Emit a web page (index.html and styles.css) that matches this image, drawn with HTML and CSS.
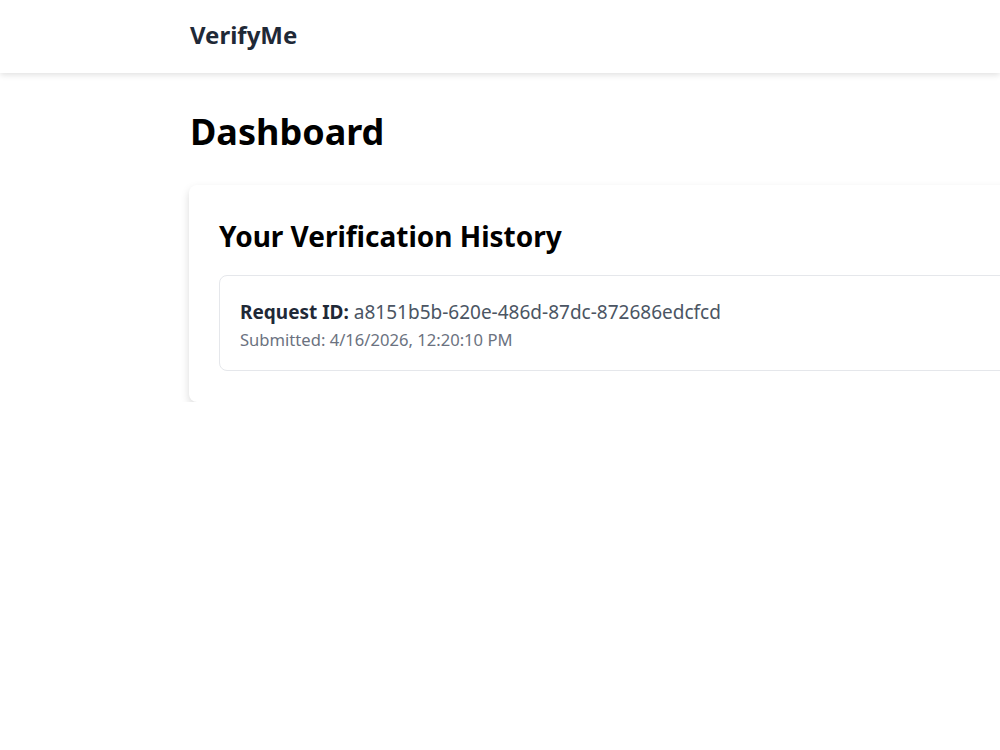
FILE: index.html
```html
<!DOCTYPE html>
<html lang="en">
<head>
<meta charset="utf-8">
<title>VerifyMe – Dashboard</title>
<link rel="stylesheet" href="styles.css">
</head>
<body>
<header class="topbar">
  <div class="container topbar-inner">
    <span class="brand">VerifyMe</span>
  </div>
</header>
<main class="container page">
  <h1 class="page-title">Dashboard</h1>
  <section class="card">
    <h2 class="card-title">Your Verification History</h2>
    <ul class="history">
      <li class="history-item">
        <p class="request-id"><strong>Request ID:</strong> a8151b5b-620e-486d-87dc-872686edcfcd</p>
        <p class="submitted">Submitted: 4/16/2026, 12:20:10 PM</p>
      </li>
    </ul>
  </section>
</main>
</body>
</html>
```
FILE: styles.css
```css
* { box-sizing: border-box; }

html, body {
  margin: 0;
  padding: 0;
  background: #ffffff;
  overflow-x: hidden;
}

body {
  font-family: "Noto Sans", "Open Sans", sans-serif;
  color: #000;
}

.container {
  width: 1200px;
  margin-left: 190px;
}

.topbar {
  background: #fff;
  height: 73px;
  box-shadow: 0 2px 6px rgba(0, 0, 0, 0.12);
}

.topbar-inner {
  height: 100%;
  display: flex;
  align-items: center;
  padding-bottom: 4px;
}

.brand {
  font-size: 24px;
  font-weight: 700;
  color: #1f2937;
}

.page {
  padding-top: 37px;
}

.page-title {
  margin: 0 0 32px;
  font-size: 36px;
  font-weight: 700;
  line-height: 1.2;
}

.card {
  margin-left: -1px;
  background: #fff;
  border-radius: 8px;
  box-shadow: 0 4px 8px rgba(0, 0, 0, 0.15);
  padding: 35px 30px 31px 30px;
}

.card-title {
  margin: 0 0 21px;
  font-size: 28px;
  font-weight: 700;
  line-height: 1.2;
}

.history {
  list-style: none;
  margin: 0;
  padding: 0;
}

.history-item {
  border: 1px solid #e5e7eb;
  border-radius: 8px;
  padding: 23px 20px 19px;
}

.request-id {
  margin: 0;
  font-size: 19px;
  color: #4b5563;
}

.request-id strong {
  color: #1f2937;
}

.submitted {
  margin: 3px 0 0;
  font-size: 16.6px;
  color: #6b7280;
}
```
